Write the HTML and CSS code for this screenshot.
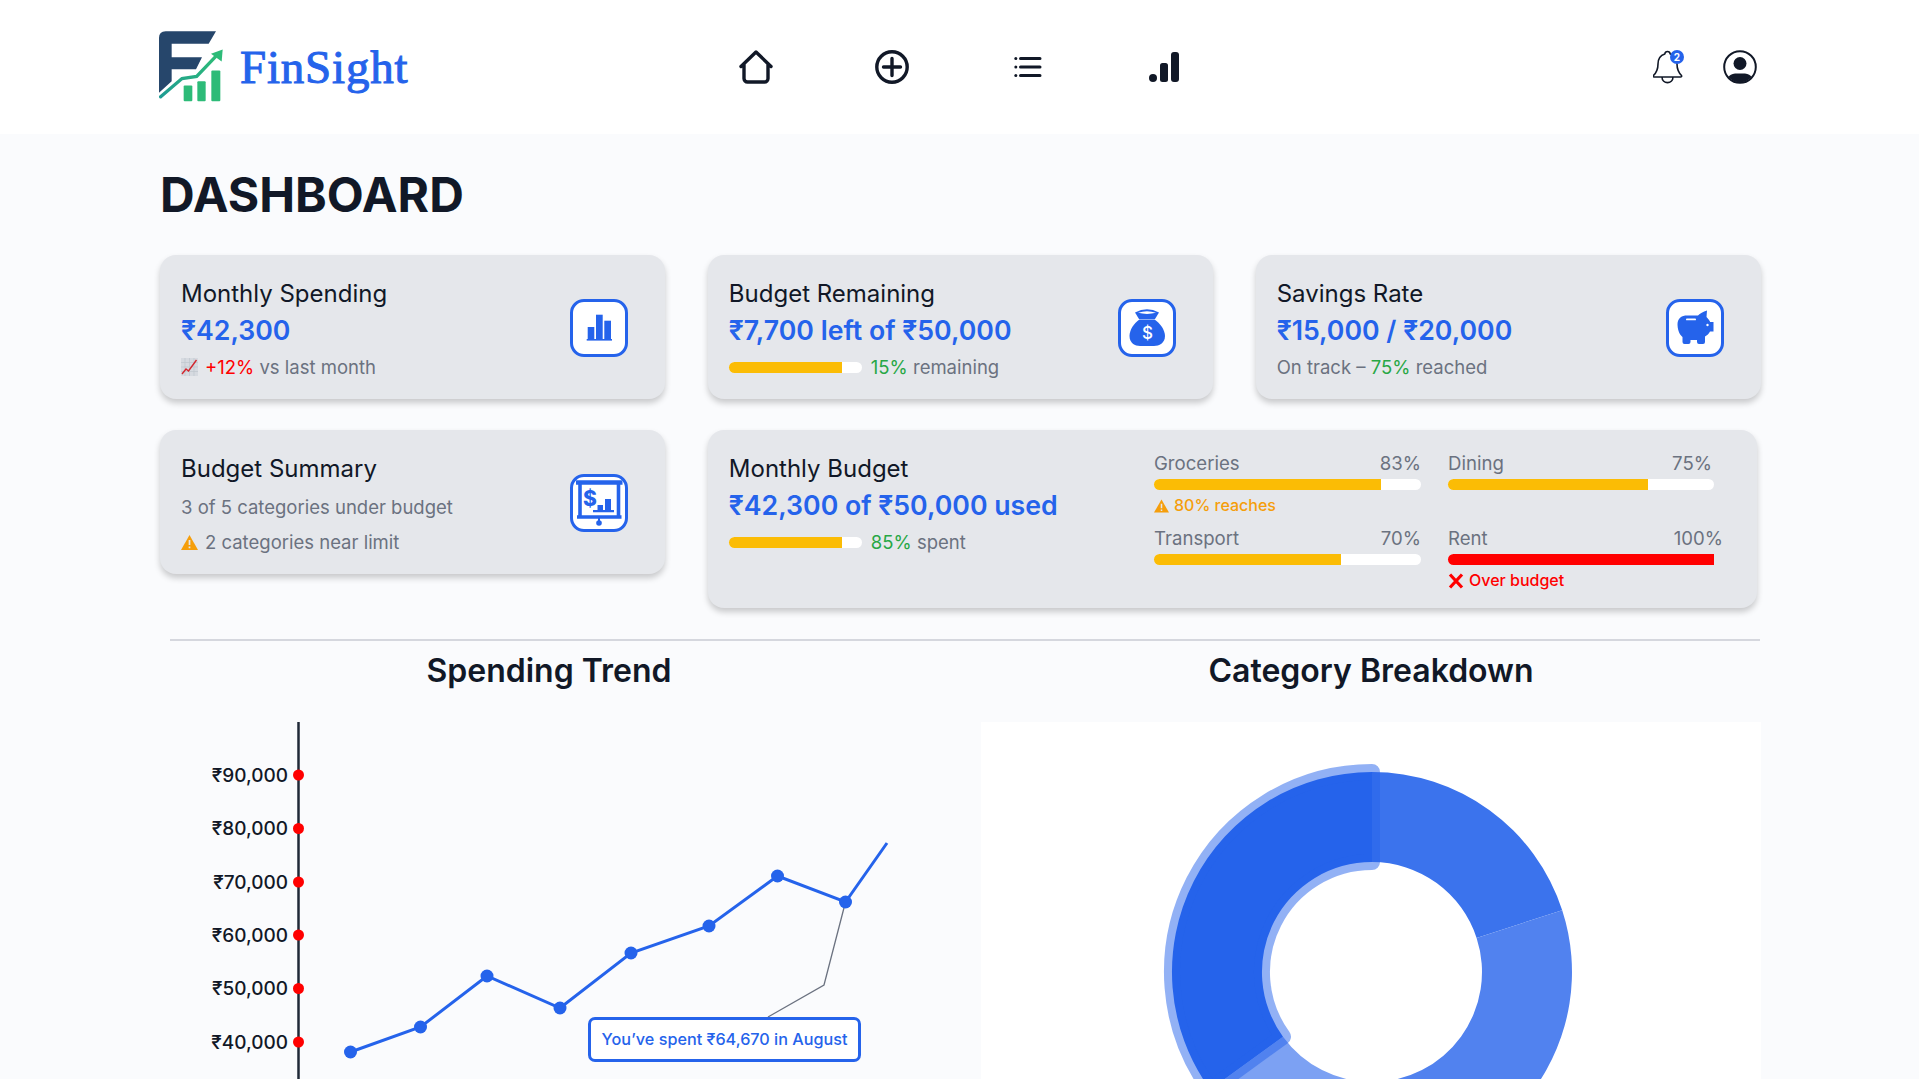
FILE: index.html
```html
<!DOCTYPE html>
<html lang="en">
<head>
    <meta charset="UTF-8">
    <meta name="viewport" content="width=device-width, initial-scale=1.0">
    <title>FinSight Dashboard</title>
    <link rel="stylesheet" href="styles.css">
</head>
<body>
    <header class="topbar">
        <a class="brand" href="#">
            <svg class="brand-mark" viewBox="57 62 195 212" aria-hidden="true">
                <defs>
                    <linearGradient id="trend" x1="0" y1="1" x2="1" y2="0">
                        <stop offset="0" stop-color="#1f9c93"/>
                        <stop offset="1" stop-color="#2dbb78"/>
                    </linearGradient>
                </defs>
                <path fill="#26466b" d="M57 82Q57 62 77 62H228L206 100H95V140H186L168 176H95V212L57 247Z"/>
                <path fill="none" stroke="url(#trend)" stroke-width="10" stroke-linecap="round" d="M62 259L126 204L170 198L226 139"/>
                <path fill="#2dbb78" d="M213 130L248 117L245 153Z"/>
                <rect x="131" y="225" width="26" height="47" rx="3" fill="#2dbb78"/>
                <rect x="172" y="212" width="25" height="60" rx="3" fill="#2dbb78"/>
                <rect x="214" y="180" width="27" height="92" rx="3" fill="#2dbb78"/>
            </svg>
            <span class="brand-name">FinSight</span>
        </a>
        <nav class="nav">
            <a href="#"><svg class="nav-icon" viewBox="0 0 34 34"><path d="M2 16.500L17 2L32 16.500M5 14V28.500A3.500 3.500 0 0 0 8.500 32H25.500A3.500 3.500 0 0 0 29 28.500V14"/></svg></a>
            <a href="#"><svg class="nav-icon" viewBox="0 0 34 34"><circle cx="17" cy="17" r="15.200"/><path d="M17 8.500V25.500M8.500 17H25.500"/></svg></a>
            <a href="#"><svg class="nav-icon thin" viewBox="0 0 34 34"><path d="M9.500 8.500H29M9.500 17H29M9.500 25.500H29"/><circle class="solid" cx="4.800" cy="8.500" r="1.500"/><circle class="solid" cx="4.800" cy="17" r="1.500"/><circle class="solid" cx="4.800" cy="25.500" r="1.500"/></svg></a>
            <a href="#"><svg class="nav-icon" viewBox="0 0 34 34"><circle class="solid" cx="6" cy="28" r="4"/><rect class="solid" x="13" y="13" width="8" height="19" rx="2.500"/><rect class="solid" x="24" y="2" width="8" height="30" rx="3"/></svg></a>
        </nav>
        <div class="top-actions">
            <span class="bell">
                <svg width="30" height="34" viewBox="0 0 30 34"><path fill="none" stroke="#111827" stroke-width="1.600" stroke-linejoin="round" d="M14.500 1.500C16 1.500 17 2.500 17.200 4C22 5.500 24 9.500 24 14C24 19 25 22 28.500 25.500Q29 27 27.500 27H1.500Q0 27 .5 25.500C4 22 5 19 5 14C5 9.500 7 5.500 11.800 4C12 2.500 13 1.500 14.500 1.500ZM9 27C9 34.500 20 34.500 20 27"/></svg>
                <span class="badge">2</span>
            </span>
            <svg width="34" height="34" viewBox="0 0 34 34"><circle cx="17" cy="17" r="15.800" fill="none" stroke="#111827" stroke-width="2"/><circle cx="17" cy="13.500" r="6.500" fill="#111827"/><path fill="#111827" d="M5.500 27Q7 24 12 23.500H22Q27 24 28.500 27A15 15 0 0 1 5.500 27Z"/></svg>
        </div>
    </header>

    <main class="page">
        <h1>DASHBOARD</h1>

        <section class="cards">
            <div class="card">
                <div>
                    <div class="card-title">Monthly Spending</div>
                    <div class="card-value">₹42,300</div>
                    <div class="card-sub">
                        <svg class="emoji" viewBox="0 0 17 18"><rect width="17" height="18" fill="#d6dae0"/><path d="M0 4.500H17M0 9H17M0 13.500H17M4 0V18M8.500 0V18M13 0V18" stroke="#bfc5cd" stroke-width=".7"/><path d="M1 16L5 11L7.500 13L15.500 2" fill="none" stroke="#d3262e" stroke-width="1.400"/></svg>
                        <span><span class="red">+12%</span> vs last month</span>
                    </div>
                </div>
                <div class="icon-box">
                    <svg viewBox="0 0 58 58" fill="#2563eb"><rect x="17.700" y="28" width="6.600" height="12"/><rect x="26" y="15.700" width="6.700" height="24.300"/><rect x="34.300" y="21.700" width="6.700" height="18.300"/><rect x="16.700" y="40" width="25.300" height="1.600"/></svg>
                </div>
            </div>

            <div class="card">
                <div>
                    <div class="card-title">Budget Remaining</div>
                    <div class="card-value">₹7,700 left of ₹50,000</div>
                    <div class="card-sub">
                        <div class="bar small"><div class="fill" style="width: 85%"></div></div>
                        <span><span class="green">15%</span> remaining</span>
                    </div>
                </div>
                <div class="icon-box">
                    <svg viewBox="0 0 58 58" fill="#2563eb">
                        <path d="M17 13.500Q29 7 41 13.500L37 20H21Z"/>
                        <path d="M20 13.800Q29 10.500 38 13.800Q29 16 20 13.800Z" fill="#fff"/>
                        <path d="M21.500 20.500H36.500C42 24 47 31 47 37C47 44 41 47 36 47H22C17 47 11.500 44 11.500 37C11.500 31 16 24 21.500 20.500Z"/>
                        <text x="29.500" y="40" class="bag-sign">$</text>
                    </svg>
                </div>
            </div>

            <div class="card">
                <div>
                    <div class="card-title">Savings Rate</div>
                    <div class="card-value">₹15,000 / ₹20,000</div>
                    <div class="card-sub"><span>On track – <span class="green">75%</span> reached</span></div>
                </div>
                <div class="icon-box">
                    <svg viewBox="0 0 58 58" fill="#2563eb">
                        <path d="M11.500 25C11.500 19 16 16.500 21 16.500H32C34 14.500 37 12.500 41 11.500L40.500 18C42 19.500 43.500 21.500 44.200 23H47.500V32.500H44C43 34.500 41 36.500 39 37.500V43A2 2 0 0 1 37 45H33A2 2 0 0 1 31 43V41H24.500V43A2 2 0 0 1 22.500 45H18.500A2 2 0 0 1 16.500 43V38C13 35 11.500 30 11.500 25Z"/>
                        <rect x="20" y="19.500" width="10" height="1.800" rx=".9" fill="#fff"/>
                        <circle cx="41.500" cy="26" r="1.200" fill="#fff"/>
                    </svg>
                </div>
            </div>

            <div class="card card-short">
                <div>
                    <div class="card-title">Budget Summary</div>
                    <div class="card-sub spaced">3 of 5 categories under budget</div>
                    <div class="card-sub spaced">
                        <svg class="warn" viewBox="0 0 17 15"><path d="M8.500 0L17 15H0Z" fill="#f59e0b"/><path d="M8.500 5V10M8.500 11.500V13.200" stroke="#e5e7eb" stroke-width="1.700"/></svg>
                        <span>2 categories near limit</span>
                    </div>
                </div>
                <div class="icon-box">
                    <svg viewBox="0 0 58 58">
                        <path d="M6 8.500H52.500" fill="none" stroke="#2563eb" stroke-width="4.600"/>
                        <path d="M10 41.500V8.500M48.500 41.500V8.500M7 43H51.500" fill="none" stroke="#2563eb" stroke-width="3.600"/>
                        <path d="M29 44V47" stroke="#2563eb" stroke-width="2"/>
                        <circle cx="29" cy="49" r="2.800" fill="#2563eb"/>
                        <text x="20" y="31.500" class="board-sign">$</text>
                        <path d="M27.500 31H33V36H27.500ZM35 25H41V36H35ZM23 36H44V38.300H23Z" fill="#2563eb"/>
                    </svg>
                </div>
            </div>

            <div class="card card-wide">
                <div>
                    <div class="card-title">Monthly Budget</div>
                    <div class="card-value">₹42,300 of ₹50,000 used</div>
                    <div class="card-sub">
                        <div class="bar small"><div class="fill" style="width: 85%"></div></div>
                        <span><span class="green">85%</span> spent</span>
                    </div>
                </div>
                <div class="budget-grid">
                    <div>
                        <div class="budget-label"><span>Groceries</span><span>83%</span></div>
                        <div class="bar"><div class="fill" style="width: 85%"></div></div>
                        <div class="budget-note amber">
                            <svg class="warn-small" viewBox="0 0 17 15"><path d="M8.500 0L17 15H0Z" fill="#f59e0b"/><path d="M8.500 5V10M8.500 11.500V13.200" stroke="#e5e7eb" stroke-width="1.700"/></svg>
                            80% reaches
                        </div>
                    </div>
                    <div>
                        <div class="budget-label"><span>Dining</span><span class="pct-in">75%</span></div>
                        <div class="bar"><div class="fill" style="width: 75%"></div></div>
                    </div>
                    <div>
                        <div class="budget-label"><span>Transport</span><span>70%</span></div>
                        <div class="bar"><div class="fill" style="width: 70%"></div></div>
                    </div>
                    <div>
                        <div class="budget-label"><span>Rent</span><span class="pct-over">100%</span></div>
                        <div class="bar"><div class="fill fill-over" style="width: 100%"></div></div>
                        <div class="budget-note red">
                            <svg class="cross" viewBox="0 0 16 16"><path d="M2 1.500L14 14.500M14 1.500L2 14.500" stroke="#f00" stroke-width="3.200"/></svg>
                            Over budget
                        </div>
                    </div>
                </div>
            </div>
        </section>

        <hr class="divider">

        <section class="charts">
            <div>
                <h2>Spending Trend</h2>
                <div class="chart trend-chart">
                    <svg viewBox="160 722 778 357" width="778" height="357">
                        <path d="M298.500 722V1079" stroke="#1f2937" stroke-width="2.500"/>
                        <g class="axis-labels">
                            <text x="288" y="782">₹90,000</text>
                            <text x="288" y="835">₹80,000</text>
                            <text x="288" y="888.500">₹70,000</text>
                            <text x="288" y="942">₹60,000</text>
                            <text x="288" y="995">₹50,000</text>
                            <text x="288" y="1048.500">₹40,000</text>
                        </g>
                        <g fill="#f00">
                            <circle cx="298.500" cy="775" r="5.500"/>
                            <circle cx="298.500" cy="828.500" r="5.500"/>
                            <circle cx="298.500" cy="882" r="5.500"/>
                            <circle cx="298.500" cy="935" r="5.500"/>
                            <circle cx="298.500" cy="988.500" r="5.500"/>
                            <circle cx="298.500" cy="1042" r="5.500"/>
                        </g>
                        <path d="M845.500 902L824 985L768 1017" fill="none" stroke="#6b7280" stroke-width="1.300"/>
                        <polyline points="350.500,1052 420.500,1027 487,976 560,1008 631,953 709,926 777.500,876 845.500,902 887,843" fill="none" stroke="#2563eb" stroke-width="3"/>
                        <g fill="#2563eb">
                            <circle cx="350.500" cy="1052" r="6.500"/>
                            <circle cx="420.500" cy="1027" r="6.500"/>
                            <circle cx="487" cy="976" r="6.500"/>
                            <circle cx="560" cy="1008" r="6.500"/>
                            <circle cx="631" cy="953" r="6.500"/>
                            <circle cx="709" cy="926" r="6.500"/>
                            <circle cx="777.500" cy="876" r="6.500"/>
                            <circle cx="845.500" cy="902" r="6.500"/>
                        </g>
                    </svg>
                    <div class="trend-tip">You’ve spent ₹64,670 in August</div>
                </div>
            </div>
            <div>
                <h2>Category Breakdown</h2>
                <div class="chart donut-chart">
                    <svg viewBox="981 722 780 357" width="780" height="357">
                        <path fill="#3b73ed" d="M1372 772A200 200 0 0 1 1562.200 910.200L1476.600 938A110 110 0 0 0 1372 862Z"/>
                        <path fill="#5182ef" d="M1562.200 910.200A200 200 0 0 1 1372 1172L1372 1082A110 110 0 0 0 1476.600 938Z"/>
                        <path fill="#7ca1f3" d="M1372 1172A200 200 0 0 1 1210.200 1089.600L1283 1036.700A110 110 0 0 0 1372 1082Z"/>
                        <path fill="#2563eb" stroke="#2563eb" stroke-opacity=".5" stroke-width="16" stroke-linejoin="round" d="M1210.200 1089.600A200 200 0 0 1 1372 772L1372 862A110 110 0 0 0 1283 1036.700Z"/>
                    </svg>
                </div>
            </div>
        </section>
    </main>
</body>
</html>
```

FILE: styles.css
```css
html, body { height: 100%; overflow: hidden; }
body { margin: 0; background: #fafbfd; color: #111827; font-family: Inter, "Noto Sans", sans-serif; }

.topbar { height: 134px; background: #fff; display: flex; align-items: center; padding: 0 162px 0 159px; box-sizing: border-box; }
.brand { display: flex; align-items: center; gap: 16px; text-decoration: none; margin-top: -1px; }
.brand-mark { width: 65px; height: 71px; }
.brand-name { font-family: "Liberation Serif", serif; font-size: 47px; letter-spacing: 0.8px; -webkit-text-stroke: 1px #2563eb; color: #2563eb; }
.nav { display: flex; gap: 102px; margin-left: 331px; }
.nav a { display: block; height: 34px; }
.nav-icon { width: 34px; height: 34px; fill: none; stroke: #111827; stroke-width: 3.4; stroke-linecap: round; stroke-linejoin: round; }
.nav-icon .solid { fill: #111827; stroke: none; }
.nav-icon.thin { stroke-width: 3; }
.top-actions { margin-left: auto; display: flex; align-items: center; gap: 39px; }
.bell { position: relative; display: block; width: 31px; height: 34px; }
.bell svg { display: block; }
.badge { position: absolute; left: 17px; top: 0; width: 14px; height: 14px; border-radius: 50%; background: #2563eb; color: #fff; font-size: 10px; font-weight: 700; line-height: 14px; text-align: center; }

.page { padding: 0 158px 0 160px; }
h1 { margin: 32px 0 31px; font-size: 48px; line-height: 58px; font-weight: 700; }

.cards { display: grid; grid-template-columns: repeat(3, 1fr); gap: 31px 42.5px; }
.card { background: #e5e7eb; border-radius: 16px; box-shadow: 0 4px 6px rgba(0, 0, 0, 0.2); padding: 22px 37px 20px 21px; min-height: 144px; box-sizing: border-box; display: flex; align-items: center; justify-content: space-between; }
.card-short { align-self: start; }
.card-wide { grid-column: span 2; margin-right: 4px; min-height: 178px; padding-right: 43px; padding-bottom: 18px; align-items: flex-start; }
.card-title { font-size: 24px; line-height: 32px; margin-top: 1px; }
.card-value { font-size: 26.7px; line-height: 41px; font-weight: 600; color: #2563eb; }
.card-sub { display: flex; align-items: center; gap: 7px; margin-top: 4px; font-size: 18.5px; line-height: 24px; color: #6b7280; }
.card-sub.spaced { margin-top: 11px; }
.card-title + .card-sub.spaced { margin-top: 10px; }
.card-sub .bar { margin-right: 2px; }
.red { color: #f00; }
.green { color: #28a745; }
.amber { color: #f59e0b; }
.emoji { width: 17px; height: 18px; }
.warn { width: 17px; height: 15px; }

.icon-box { width: 58px; height: 58px; flex: none; box-sizing: border-box; border: 3px solid #2563eb; border-radius: 14px; background: #fff; overflow: hidden; }
.icon-box svg { display: block; width: 58px; height: 58px; margin: -3px; }
.bag-sign { font-size: 17px; font-weight: 500; fill: #fff; text-anchor: middle; }
.board-sign { font-size: 21px; font-weight: 800; fill: #2563eb; text-anchor: middle; }

.bar { height: 11px; background: #fff; border-radius: 6px; }
.bar.small { width: 133px; flex: none; }
.fill { height: 100%; background: #fbbc05; border-radius: 6px 0 0 6px; }
.fill-over { background: #f00; }

.budget-grid { display: grid; grid-template-columns: 267px 266px; gap: 12px 27px; align-content: start; }
.budget-label { display: flex; justify-content: space-between; font-size: 18.6px; line-height: 22px; color: #6b7280; margin-bottom: 5px; }
.pct-in { margin-right: 2px; }
.pct-over { margin-right: -9px; }
.budget-note { display: flex; align-items: center; gap: 5px; margin-top: 6px; font-size: 16px; line-height: 19px; font-weight: 500; }
.warn-small { width: 15px; height: 14px; }
.cross { width: 16px; height: 16px; }

.divider { margin: 31px 1px 0 10px; border: 0; border-top: 2px solid #d5d7de; }

.charts { display: grid; grid-template-columns: 778px 780px; gap: 43px; }
h2 { margin: 10px 0 31px; font-size: 32px; line-height: 40px; font-weight: 600; text-align: center; }
.chart { position: relative; height: 357px; }
.chart svg { display: block; }
.donut-chart { background: #fff; }
.axis-labels text { font-size: 19px; font-weight: 500; fill: #111827; text-anchor: end; }
.trend-tip { position: absolute; left: 428px; top: 295px; width: 273px; height: 45px; box-sizing: border-box; border: 3px solid #2563eb; border-radius: 7px; background: #fff; color: #2563eb; font-size: 16.2px; font-weight: 500; line-height: 39px; text-align: center; }
```
